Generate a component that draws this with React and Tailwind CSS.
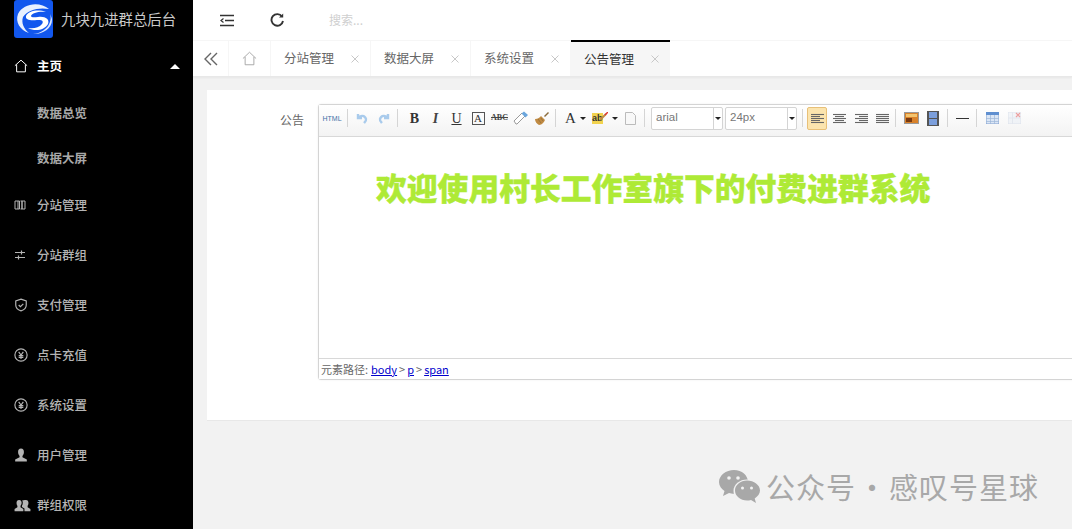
import React from "react";

const cjk = { fontFamily: '"Noto Sans CJK SC", "Noto Sans", sans-serif' };

function Ico({ children, className = "", size = 14, box = 24, strokeWidth = 2 }) {
    return (
        <svg width={size} height={size} viewBox={`0 0 ${box} ${box}`} fill="none" stroke="currentColor" strokeWidth={strokeWidth} className={className}>
            {children}
        </svg>
    );
}

function Logo() {
    return (
        <svg width="39" height="38" viewBox="0 0 39 38" className="shrink-0">
            <rect width="39" height="38" rx="3" fill="#1257ee" />
            <path d="M35 9C26 1 9 3 4 14C1 22 6 30 15 33C10 29 7 23 9 17C13 10 25 7 35 9Z" fill="#e8f0ff" />
            <path d="M32 12C24 9 14 11 12 16C11 20 17 21 23 20C28 19.500 30 21 28 24C25 28 19 29 14 28C21 32 31 30 34 24C36 19 31 16 24 17C20 17.500 17 17.500 17 16C18 13 25 11 32 12Z" fill="#fff" />
            <path d="M36 14C39 22 32 33 19 34C27 35 38 29 38 20C38 18 37 16 36 14Z" fill="#dbe7ff" />
        </svg>
    );
}

const Yen = () => (
    <Ico size={14}>
        <circle cx="12" cy="12" r="10.5" />
        <path d="M8 6.500l4 5.500 4-5.500M12 12v7M8 13h8M8 16h8" />
    </Ico>
);

const sideItems = [
    ["分站管理", <Ico size={12}><path d="M2 4h6v16H2zM16 4h6v16h-6zM8 4h3v16H8M13 4h3v16h-3" /></Ico>],
    ["分站群组", <Ico size={12} strokeWidth={2.4}><path d="M2 7h20M2 17h20" /><path d="M15 3v8M9 13v8" /></Ico>],
    ["支付管理", <Ico size={14}><path d="M12 2l9 3v7c0 5-4 8.500-9 10-5-1.500-9-5-9-10V5z" /><path d="M8 12l3 3 5-5" /></Ico>],
    ["点卡充值", <Yen />],
    ["系统设置", <Yen />],
    ["用户管理", <svg width="14" height="14" viewBox="0 0 24 24" fill="currentColor"><path d="M12 1c3.500 0 5 2.500 5 6 0 3-1 5-2.500 6.500V16l7.500 3.500V23H2v-3.500L9.500 16v-2.500C8 12 7 10 7 7c0-3.500 1.500-6 5-6z" /></svg>],
    ["群组权限", <svg width="17" height="14" viewBox="0 0 30 24" fill="currentColor"><path d="M9 3c3 0 4.500 2 4.500 5 0 2.500-1 4-2 5.500V16l5 3v4H1v-4l5-3v-2.500C5 12 4.500 10.500 4.500 8 4.500 5 6 3 9 3zM21 3c3 0 4.500 2 4.500 5 0 2.500-.5 4-1.500 5.500V16l5 3v4H18.500v-5l-4.500-2.500v-2c1-1.500 1.500-3.500 1.500-5.500 0-2-.5-3-1-4C15.500 3.500 18 3 21 3z" /></svg>],
];

function Sidebar() {
    return (
        <aside className="w-[193px] h-full shrink-0 bg-black text-[#b4b4b4] text-[12.5px] font-medium">
            <div className="h-[41px] flex items-start pl-[14px] gap-2">
                <Logo />
                <span className="text-[14.4px] font-normal leading-[38px] text-[#c9c9c9] whitespace-nowrap">九块九进群总后台</span>
            </div>
            <div className="h-[50px] flex items-center pl-[14px] pr-[13px] text-white font-bold">
                <span className="w-[23px]">
                    <Ico size={14} strokeWidth={1.7}><path d="M1.500 11.500L12 2l10.500 9.500M4.500 9.500V22h15V9.500" /></Ico>
                </span>
                <span className="flex-1">主页</span>
                <span className="w-0 h-0 border-x-[5px] border-x-transparent border-b-[5px] border-b-white" />
            </div>
            <div className="h-[45px] flex items-center pl-[37px] font-bold text-[#a8a8a8]">数据总览</div>
            <div className="h-[44px] flex items-center pl-[37px] font-bold text-[#a8a8a8]">数据大屏</div>
            {sideItems.map(([label, icon]) => (
                <div key={label} className="h-[50px] flex items-center pl-[14px]">
                    <span className="w-[23px] flex items-center">{icon}</span>
                    {label}
                </div>
            ))}
        </aside>
    );
}

function TopBar() {
    return (
        <div className="h-[41px] bg-white flex items-center border-b border-[#f6f6f6] text-[#333]">
            <span className="ml-[27px] w-[14px]">
                <svg width="14" height="13" viewBox="0 0 14 13" fill="none" stroke="currentColor" strokeWidth="1.500">
                    <path d="M0 1.500h14M5 6.500h9M0 11.500h14" />
                    <path d="M3.500 4.500L1 6.500l2.500 2" strokeWidth="1.200" />
                </svg>
            </span>
            <span className="ml-[36px] w-[14px]">
                <svg width="14" height="14" viewBox="0 0 14 14" fill="none" stroke="currentColor" strokeWidth="1.900">
                    <path d="M12 3.500A5.800 5.800 0 1 0 13 8" />
                    <path d="M9 4.500h4.200V.5z" fill="currentColor" stroke="none" />
                </svg>
            </span>
            <span className="ml-[45px] text-[12px] text-[#cfcfcf]">搜索...</span>
        </div>
    );
}

const tabs = ["分站管理", "数据大屏", "系统设置"];

const TabClose = () => (
    <svg width="8" height="8" viewBox="0 0 8 8" stroke="#c8c8c8" strokeWidth="1"><path d="M.5.500l7 7M7.500.5l-7 7" /></svg>
);

function TabBar() {
    return (
        <div className="h-[36px] bg-white flex border-b border-[#e8e8e8] shadow-[0_1px_2px_rgba(0,0,0,0.05)] text-[12.500px] text-[#666]">
            <div className="w-[36px] flex items-center justify-center border-r border-[#f6f6f6] text-[#666]">
                <svg width="14" height="14" viewBox="0 0 14 14" fill="none" stroke="currentColor" strokeWidth="1.400">
                    <path d="M7 1L1 7l6 6M13 1L7 7l6 6" />
                </svg>
            </div>
            <div className="w-[42px] flex items-center justify-center border-r border-[#f6f6f6] text-[#999]">
                <Ico size={15} strokeWidth={1.3}><path d="M1.500 12L12 2l10.500 10M5 9.500V22h14V9.500" /></Ico>
            </div>
            {tabs.map((t) => (
                <div key={t} className="w-[100px] flex items-center pl-[13px] border-r border-[#f6f6f6]">
                    <span className="w-[67px]">{t}</span>
                    <TabClose />
                </div>
            ))}
            <div className="w-[99px] flex items-center pl-[13px] bg-[#f6f6f6] border-t-2 border-black text-[#333] -mt-px">
                <span className="w-[67px]">公告管理</span>
                <TabClose />
            </div>
        </div>
    );
}

const Sep = ({ className = "" }) => <span className={`w-px h-[18px] bg-[#d5d5d5] shrink-0 ${className}`} />;

function Btn({ w = 21, children, className = "" }) {
    return <span style={{ width: w }} className={`h-5 flex items-center justify-center shrink-0 ${className}`}>{children}</span>;
}

const Caret = () => <span className="w-0 h-0 border-x-[3px] border-x-transparent border-t-[3px] border-t-[#222]" />;

const serif = { fontFamily: '"Liberation Serif", serif' };

function Select({ value }) {
    return (
        <span className="w-[72px] h-[23px] border border-[#d4d4d4] rounded-[2px] bg-white flex items-center text-[11.500px] text-[#777] shrink-0" style={{ fontFamily: '"Liberation Sans", sans-serif' }}>
            <span className="flex-1 pl-[4px]">{value}</span>
            <span className="w-[9px] h-full border-l border-[#d4d4d4] flex items-center justify-center"><Caret /></span>
        </span>
    );
}

function AlignIcon({ lines }) {
    return (
        <svg width="13" height="11" viewBox="0 0 13 11" stroke="#666" strokeWidth="1.100">
            {lines.map(([a, b], i) => <path key={i} d={`M${a} ${i * 2 + 1.500}H${b}`} />)}
        </svg>
    );
}

function Toolbar() {
    return (
        <div className="h-[32px] flex items-center pl-[2px] pb-[5px] border-b border-[#d8d8d8] bg-gradient-to-b from-white to-[#f3f3f3] text-[#444]">
            <Btn w={22}><span className="text-[7px] font-medium text-[#3f72a8] leading-none" style={{ fontFamily: '"Liberation Sans", sans-serif' }}>HTML</span></Btn>
            <Sep className="ml-[4px] mr-[3px]" />
            <Btn w={22}>
                <svg width="12" height="11" viewBox="0 0 12 11" fill="none" stroke="#a9cbec" strokeWidth="2.400"><path d="M2 1v4h4M2 5c2-3 7-3 8 1 .4 2-1 3-2 4" /></svg>
            </Btn>
            <Btn w={22}>
                <svg width="12" height="11" viewBox="0 0 12 11" fill="none" stroke="#a9cbec" strokeWidth="2.400"><path d="M10 1v4H6M10 5C8 2 3 2 2 6c-.4 2 1 3 2 4" /></svg>
            </Btn>
            <Sep className="ml-[2px] mr-[6px]" />
            <Btn><span className="text-[14px] font-bold text-[#333]" style={serif}>B</span></Btn>
            <Btn><span className="text-[14px] italic font-bold text-[#444]" style={serif}>I</span></Btn>
            <Btn><span className="text-[14px] underline text-[#333]" style={serif}>U</span></Btn>
            <Btn w={22}><span className="w-[13px] h-[13px] border border-[#555] flex items-center justify-center text-[11px] leading-none text-[#333]" style={serif}>A</span></Btn>
            <Btn><span className="text-[8px] font-bold line-through text-[#444]" style={serif}>ABC</span></Btn>
            <Btn w={21}>
                <svg width="16" height="15" viewBox="0 0 16 15"><path d="M1 10L9 2l3 3-8 8H3z" fill="#fff" stroke="#999" /><path d="M8.500 2.500l2.500-2 4 3.500-2.500 2.500z" fill="#6aa5dc" /></svg>
            </Btn>
            <Btn w={22}>
                <svg width="16" height="15" viewBox="0 0 16 15"><path d="M10 5l4-4 1 1-4 4z" fill="#8a6a3a" /><path d="M1 8c3 0 5-2 6-3l4 4c-1 2-3 5-6 5-2-1-4-3-4-6z" fill="#c08a42" /><path d="M4 8l3 4M7 7l2 3" stroke="#8a6a3a" strokeWidth=".7" /></svg>
            </Btn>
            <Sep className="ml-[2px] mr-[5px]" />
            <Btn w={19}><span className="text-[15px] text-[#333]" style={serif}>A</span></Btn>
            <Caret />
            <Btn w={24} className="ml-[2px]">
                <span className="relative w-[16px] h-[13px] flex items-center">
                    <span className="bg-[#f2d34e] text-[9px] leading-[11px] font-bold text-[#333]" style={{ fontFamily: '"Liberation Sans", sans-serif' }}>ab</span>
                    <svg width="8" height="9" viewBox="0 0 8 9" className="absolute right-0 top-0"><path d="M0 8l6-6" stroke="#c08a42" strokeWidth="2" /><path d="M5 3l3-3" stroke="#d33" strokeWidth="1.500" /></svg>
                </span>
            </Btn>
            <Caret />
            <Btn w={23} className="ml-[1px]">
                <svg width="11" height="13" viewBox="0 0 11 13"><path d="M.5.500h7l3 3v9H.5z" fill="#f8f8f8" stroke="#bbb" /></svg>
            </Btn>
            <Sep className="ml-[2px] mr-[6px]" />
            <span className="flex gap-[2px]">
                <Select value="arial" />
                <Select value="24px" />
            </span>
            <span className="w-[2px]" />
            <Sep className="ml-[3px] mr-[4px]" />
            <Btn w={20} className="h-[23px] bg-[#fbe4ae] border border-[#e8c078] rounded-[2px]">
                <AlignIcon lines={[[0, 13], [0, 9], [0, 13], [0, 9], [0, 13]]} />
            </Btn>
            <Btn w={22} className="ml-[1px]"><AlignIcon lines={[[0, 13], [2, 11], [0, 13], [2, 11], [0, 13]]} /></Btn>
            <Btn w={22}><AlignIcon lines={[[0, 13], [4, 13], [0, 13], [4, 13], [0, 13]]} /></Btn>
            <Btn w={21}><AlignIcon lines={[[0, 13], [0, 13], [0, 13], [0, 13], [0, 13]]} /></Btn>
            <Sep className="ml-[2px] mr-[4px]" />
            <Btn w={22}>
                <svg width="15" height="12" viewBox="0 0 15 12"><rect x=".5" y=".5" width="14" height="11" fill="#d9822b" stroke="#999" /><rect x="2" y="2" width="11" height="3" fill="#f3c46e" /><rect x="2" y="6" width="6" height="4" fill="#7a3a10" /></svg>
            </Btn>
            <Btn w={22}>
                <svg width="12" height="15" viewBox="0 0 12 15"><rect width="12" height="15" fill="#555" /><rect x="2" y="1" width="8" height="6" fill="#7c9fdc" /><rect x="2" y="8" width="8" height="6" fill="#7c9fdc" /></svg>
            </Btn>
            <Sep className="ml-[3px] mr-[4px]" />
            <Btn w={20}><span className="w-[13px] h-px bg-[#333]" /></Btn>
            <Sep className="mx-[4px]" />
            <Btn w={22}>
                <svg width="13" height="12" viewBox="0 0 13 12"><rect width="13" height="12" fill="#dbe6f5" stroke="#7f9fcf" /><rect width="13" height="3" fill="#5f8fd0" /><path d="M4.500 3v9M8.500 3v9M0 6.500h13M0 9.500h13" stroke="#9db6d8" strokeWidth=".7" /></svg>
            </Btn>
            <Btn w={22}>
                <svg width="13" height="12" viewBox="0 0 13 12" opacity=".45"><rect width="13" height="12" fill="#e6ecf5" stroke="#bcc8dc" /><path d="M4.500 0v12M0 6h13" stroke="#c8d2e2" /><path d="M8 1l4 4M12 1L8 5" stroke="#d33" strokeWidth="1.200" /></svg>
            </Btn>
        </div>
    );
}

function Editor() {
    return (
        <div className="w-[900px] h-[276px] shrink-0 flex flex-col border border-[#d4d4d4] rounded-[3px] bg-white shadow-[0_0_2px_rgba(0,0,0,0.08)]">
            <Toolbar />
            <div className="flex-1 pl-[57px] pt-[27px]">
                <p className="text-[#aeea36] text-[30.800px] leading-[46px] font-black whitespace-nowrap" style={{ ...cjk, WebkitTextStroke: "0.4px #aeea36" }}>
                    欢迎使用村长工作室旗下的付费进群系统
                </p>
            </div>
            <div className="h-[21px] flex items-center pl-[2px] gap-[2px] border-t border-[#d8d8d8] bg-white text-[11px] text-[#666]">
                <span className="mr-px">元素路径:</span>
                <span className="underline text-[#0000cc]">body</span> &gt;
                <span className="underline text-[#0000cc]">p</span> &gt;
                <span className="underline text-[#0000cc]">span</span>
            </div>
        </div>
    );
}

function Watermark() {
    return (
        <div className="absolute left-[719px] top-[466px] flex items-center text-[#a8a8a8] text-[29px] leading-[40px] tracking-[1px] whitespace-nowrap">
            <svg width="41" height="35" viewBox="0 0 41 35" className="mr-[6px]">
                <path d="M15 1C7 1 0 6.500 0 13c0 4 2.500 7 5.500 9L4 27l6-3c1.500.5 3 .7 5 .7C23 24.700 29 19.500 29 13 29 6.500 23 1 15 1z" fill="currentColor" />
                <ellipse cx="28" cy="22" rx="13.500" ry="11.500" fill="#f2f2f2" />
                <path d="M28 11.500c-6.500 0-12 4.500-12 10s5.500 10 12 10c1.500 0 2.500-.2 4-.6L37 34l-1.300-4.500c3-2 5.300-4.700 5.300-8 0-5.500-6-10-13-10z" fill="currentColor" />
                <circle cx="10" cy="9" r="1.800" fill="#f2f2f2" />
                <circle cx="19" cy="9" r="1.800" fill="#f2f2f2" />
                <circle cx="23.500" cy="19" r="1.500" fill="#f2f2f2" />
                <circle cx="32.500" cy="19" r="1.500" fill="#f2f2f2" />
            </svg>
            <span>公众号</span>
            <span className="w-[33px] text-center">·</span>
            <span>感叹号星球</span>
        </div>
    );
}

export default function App() {
    return (
        <div className="relative w-[1072px] h-[529px] flex overflow-hidden bg-[#f2f2f2]" style={cjk}>
            <Sidebar />
            <main className="flex-1 min-w-0 flex flex-col">
                <TopBar />
                <TabBar />
                <div className="flex-1 pt-[13px] pl-[14px]">
                    <div className="h-[331px] bg-white border-b border-[#e8e8e8] flex pt-[14px] overflow-hidden">
                        <label className="w-[97px] pt-[7px] text-right text-[12px] text-[#666] shrink-0">公告</label>
                        <span className="w-[14px] shrink-0" />
                        <Editor />
                    </div>
                </div>
            </main>
            <Watermark />
        </div>
    );
}
